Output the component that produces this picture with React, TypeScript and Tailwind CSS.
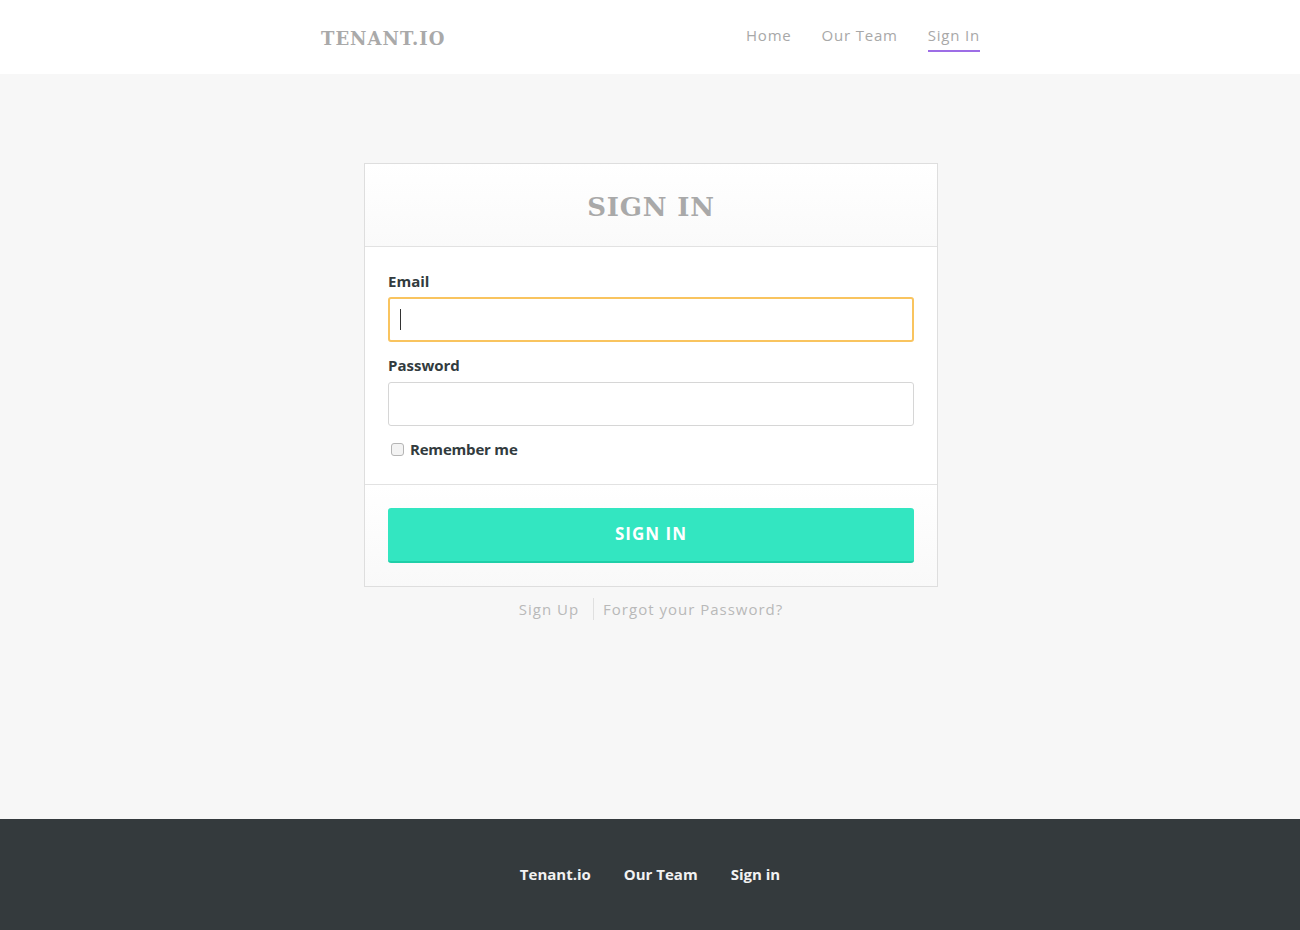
import { useState } from "react";

const sans = "font-['Open_Sans','Noto_Sans',sans-serif]";
const slab = "font-['DejaVu_Serif','Liberation_Serif',serif]";

function Header() {
  return (
    <header className="h-[74px] bg-white">
      <div className="mx-auto flex h-full w-[660px] items-center justify-between pl-px">
        <span className={`${slab} text-[18px] font-bold tracking-[1px] text-[#a9a9a9] mt-[2px]`}>TENANT.IO</span>
        <nav className={`${sans} flex gap-[30px] text-[15px] tracking-[0.8px] text-[#a8a8a8] mt-[2px]`}>
          <a className="pb-[6px]">Home</a>
          <a className="pb-[6px]">Our Team</a>
          <a className="border-b-2 border-[#9d6de6] pb-[4px]">Sign In</a>
        </nav>
      </div>
    </header>
  );
}

function SignInCard() {
  const [formData, setFormData] = useState({ email: "", password: "", remember: false });

  return (
    <div className="w-[574px]">
      <div className="border border-[#dedede] bg-white">
        <div className="flex h-[83px] items-center justify-center border-b border-[#e2e2e2] bg-gradient-to-b from-white to-[#fafafa]">
          <h2 className={`${slab} text-[26px] font-bold tracking-[0.8px] text-[#a9a9a9] mt-[4px]`}>SIGN IN</h2>
        </div>
        <form className={`${sans} px-[23px] pt-[24px] pb-[23px]`}>
          <label htmlFor="email" className="block text-[15px] font-bold text-[#323b3e] leading-[20px]">Email</label>
          <div className="relative mt-[6px]">
            <input
              id="email"
              type="email"
              value={formData.email}
              onChange={(e) => setFormData((prev) => ({ ...prev, email: e.target.value }))}
              className="block h-[45px] w-full rounded-[3px] border-2 border-[#f9c45f] px-[10px] text-[15px] text-[#333] outline-none"
            />
            {formData.email === "" && (
              <span className="pointer-events-none absolute left-[12px] top-[12px] h-[21px] w-px bg-[#333]" />
            )}
          </div>
          <label htmlFor="password" className="mt-[13px] block text-[15px] font-bold text-[#323b3e] leading-[20px]">Password</label>
          <input
            id="password"
            type="password"
            value={formData.password}
            onChange={(e) => setFormData((prev) => ({ ...prev, password: e.target.value }))}
            className="mt-[7px] block h-[44px] w-full rounded-[3px] border border-[#d6d6d6] px-[10px] text-[15px] outline-none"
          />
          <label className="mt-[12px] flex items-center gap-[6px] pl-[3px] text-[15px] font-bold tracking-[-0.2px] text-[#323b3e]">
            <input
              type="checkbox"
              checked={formData.remember}
              onChange={(e) => setFormData((prev) => ({ ...prev, remember: e.target.checked }))}
              className="h-[13px] w-[13px] appearance-none rounded-[3px] border border-[#b5b5b5] bg-[#f3f3f3]"
            />
            Remember me
          </label>
        </form>
        <div className="border-t border-[#e2e2e2] bg-gradient-to-b from-white to-[#f9f9f9] px-[23px] pt-[23px] pb-[23px]">
          <button
            type="button"
            className={`${sans} h-[55px] w-full rounded-[3px] border-b-2 border-[#20cfa8] bg-[#33e6c1] text-[17px] font-bold tracking-[1px] text-white`}
          >
            SIGN IN
          </button>
        </div>
      </div>
      <div className={`${sans} mt-[11px] flex items-center justify-center text-[15px] tracking-[1px] text-[#b9b9b9]`}>
        <a className="pr-[14px]">Sign Up</a>
        <span className="h-[22px] w-px bg-[#e0e0e0]" />
        <a className="pl-[9px]">Forgot your Password?</a>
      </div>
    </div>
  );
}

function Footer() {
  return (
    <footer className="flex h-[111px] items-center justify-center bg-[#343a3d]">
      <nav className={`${sans} flex gap-[33px] text-[15px] font-bold tracking-normal text-[#f2f2f2] mb-[1px]`}>
        <a>Tenant.io</a>
        <a>Our Team</a>
        <a>Sign in</a>
      </nav>
    </footer>
  );
}

export default function App() {
  return (
    <div className="flex min-h-[930px] flex-col bg-[#f7f7f7]">
      <Header />
      <main className="flex flex-1 justify-center pt-[89px] pl-[2px]">
        <SignInCard />
      </main>
      <Footer />
    </div>
  );
}
